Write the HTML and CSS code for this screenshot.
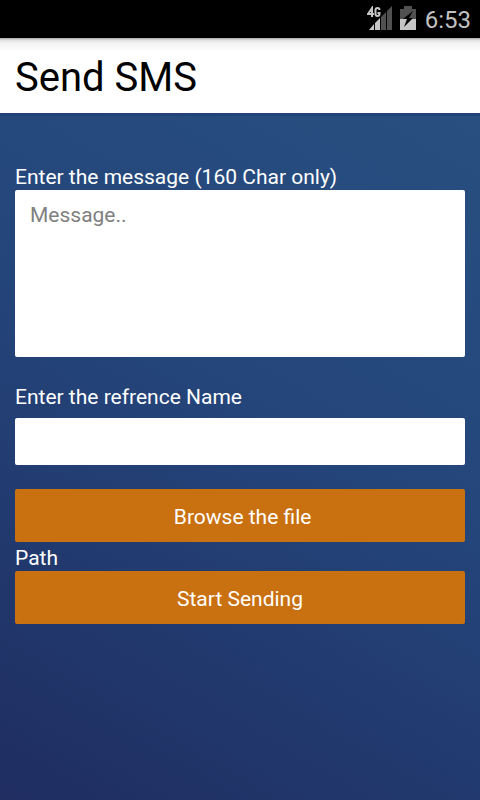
FILE: index.html
```html
<!DOCTYPE html>
<html lang="en">
<head>
<meta charset="utf-8">
<meta name="viewport" content="width=device-width, initial-scale=1">
<title>Send SMS</title>
<link rel="stylesheet" href="styles.css">
</head>
<body>
<div class="status-bar">
  <svg class="signal" viewBox="0 0 25 24" width="25" height="24" role="img" aria-label="Mobile signal">
    <path fill="#505050" d="M14 11l5-5v18h-5zM20 5l5-5v24h-5z"/>
    <path fill="#c6c6c6" d="M2 24l5-6v6zM8 17l5-5v12H8z"/>
    <path fill="#000" d="M0 0h14v12H0z"/>
    <path fill="none" stroke="#c6c6c6" stroke-width="2" d="M5 11V2L1 8h6M12.500 4q0-2-2-2T8.500 4v4q0 2 2 2t2-2V7h-2"/>
  </svg>
  <svg class="battery" viewBox="0 0 16 24" width="16" height="24" role="img" aria-label="Battery charging">
    <path fill="#505050" d="M4 0h8v3h4v10H0V3h4z"/>
    <path fill="#c6c6c6" d="M0 13h16v11H0z"/>
    <path fill="#000" d="M13 5L3 13h4l-3 8 9-9H9z"/>
  </svg>
  <time class="clock">6:53</time>
</div>
<header class="title-bar"><h1>Send SMS</h1></header>
<main>
  <form class="sms-form">
    <label for="message">Enter the message (160 Char only)</label>
    <textarea id="message" maxlength="160" placeholder="Message.."></textarea>
    <label class="name-label" for="reference">Enter the refrence Name</label>
    <input id="reference" type="text">
    <button type="button">&nbsp;Browse the file</button>
    <p class="path">Path</p>
    <button type="submit">Start Sending</button>
  </form>
</main>
</body>
</html>
```
FILE: styles.css
```css
* {
  box-sizing: border-box;
}

body {
  display: flex;
  flex-direction: column;
  min-height: 100vh;
  margin: 0;
  font: 21px/25px Roboto, sans-serif;
  color: #fff;
  background: #fff;
}

.status-bar {
  display: flex;
  align-items: flex-start;
  justify-content: flex-end;
  height: 38px;
  padding: 6px 9px 0;
  background: #000;
}

.battery {
  margin: 0 9px 0 8px;
}

.clock {
  font-size: 24px;
  line-height: 28px;
  color: #c2c2c2;
}

.title-bar {
  padding: 17px 15px 13px;
  color: #000;
  background: linear-gradient(#a5a5a5, #dedede 2px, #f2f2f2 5px, #fff 13px);
}

h1 {
  margin: 0;
  font-size: 40px;
  font-weight: 400;
  line-height: 45px;
}

main {
  flex: 1;
  padding: 49px 15px 15px;
  border-top: 3px solid #24427a;
  background: linear-gradient(210deg, #284f80, #24457a 45%, #1f2d61);
}

.sms-form {
  display: flex;
  flex-direction: column;
}

textarea,
input {
  width: 100%;
  margin: 0;
  padding: 13px 15px;
  border: 0;
  border-radius: 2px;
  font: inherit;
  color: #000;
  background: #fff;
  resize: none;
}

textarea {
  height: 167px;
  margin: 0 0 28px;
}

input {
  height: 47px;
  padding: 11px 15px;
  margin: 8px 0 24px;
}

::placeholder {
  color: #808080;
  opacity: 1;
}

button {
  padding: 16px 14px 12px;
  border: 0;
  border-radius: 2px;
  font: inherit;
  color: #fff;
  background: #c97110;
}

.path {
  margin: 0;
  padding: 4px 0 0;
}
```
